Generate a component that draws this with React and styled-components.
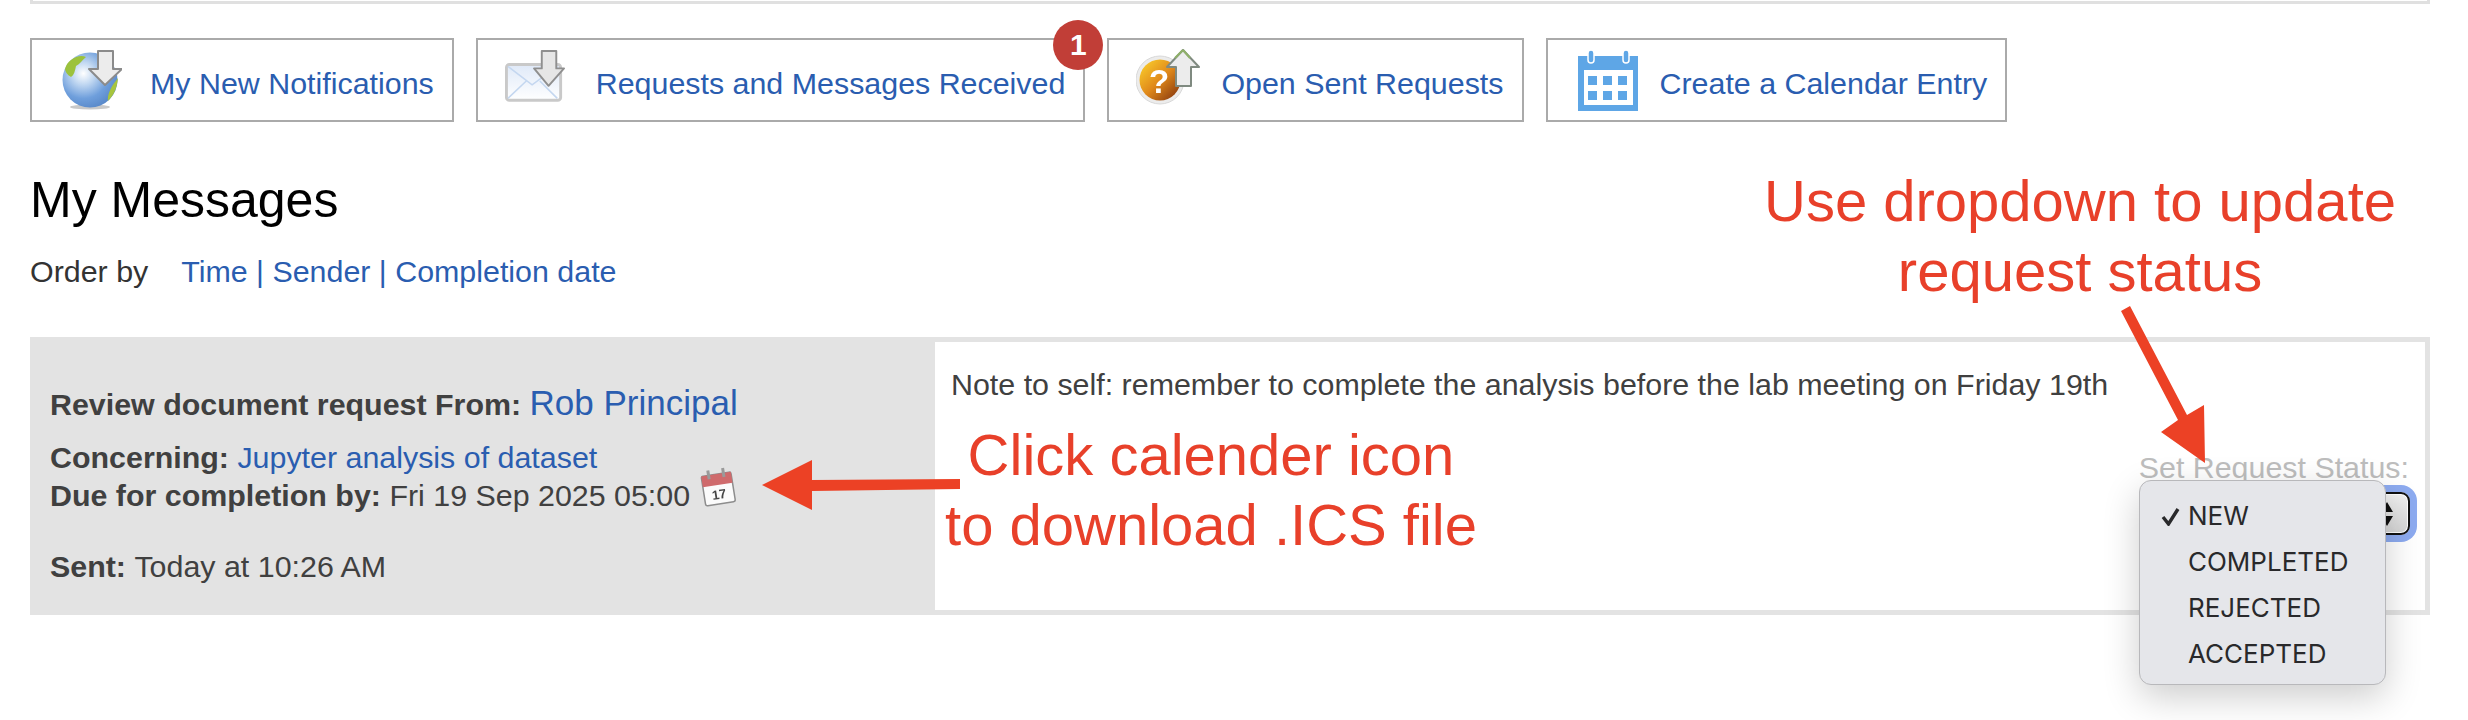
import React from "react";
import styled, { createGlobalStyle } from "styled-components";

const GlobalStyle = createGlobalStyle`
  html, body {
    margin: 0;
    padding: 0;
    background: #fff;
  }
  body {
    font-family: "Liberation Sans", Arial, sans-serif;
    color: #404040;
  }
`;

const Page = styled.div`
  position: relative;
  width: 2468px;
  height: 720px;
  padding: 0 38px 0 30px;
  box-sizing: border-box;
  overflow: hidden;
`;

const TopStrip = styled.div`
  height: 1px;
  border: 3px solid #e0e0e0;
  border-top: none;
`;

const Toolbar = styled.nav`
  display: flex;
  gap: 22px;
  margin-top: 34px;
`;

const ToolButton = styled.a`
  position: relative;
  display: flex;
  align-items: center;
  gap: ${(p) => p.$gap}px;
  height: 84px;
  padding: 0 18px 0 ${(p) => p.$inset}px;
  box-sizing: border-box;
  border: 2px solid #aaaaaa;
  background: #fff;
  color: #2a5db0;
  font-size: 30.4px;
  white-space: nowrap;
`;

const ButtonLabel = styled.span`
  padding-top: 6px;
`;

const IconSvg = styled.svg`
  display: block;
  flex: none;
  width: ${(p) => p.$w || 60}px;
  height: 62px;
  filter: blur(0.6px);
`;

const Badge = styled.span`
  position: absolute;
  top: -20px;
  right: -20px;
  width: 50px;
  height: 50px;
  border-radius: 50%;
  background: #c13e37;
  color: #fff;
  font-size: 30px;
  font-weight: 700;
  line-height: 50px;
  text-align: center;
`;

const Heading = styled.h1`
  margin: 49px 0 0;
  color: #000;
  font-size: 50px;
  font-weight: 400;
  line-height: 58px;
`;

const OrderRow = styled.div`
  display: flex;
  gap: 33px;
  margin-top: 24px;
  color: #333;
  font-size: 30.4px;
  line-height: 36px;
`;

const LinkText = styled.a`
  color: #2a5db0;
`;

const MessageRow = styled.section`
  display: flex;
  height: 278px;
  margin-top: 48px;
`;

const MessageMeta = styled.div`
  flex: none;
  width: 905px;
  padding: 47px 0 0 20px;
  box-sizing: border-box;
  background: #e3e3e3;
  font-size: 30.4px;
  line-height: 38px;
`;

const MetaLine = styled.div`
  margin-top: ${(p) => p.$gap || 0}px;
`;

const Sender = styled.a`
  color: #2a5db0;
  font-size: 35px;
`;

const SmallCal = styled.svg`
  width: 40px;
  height: 42px;
  margin: -20px 0 0 8px;
  vertical-align: -2px;
  filter: blur(0.7px);
`;

const MessageBody = styled.div`
  flex: 1;
  display: flex;
  flex-direction: column;
  align-items: flex-end;
  padding: 24px 16px 0 11px;
  border: 5px solid #e3e3e3;
  border-left: none;
  font-size: 30.4px;
  line-height: 36px;
`;

const Note = styled.p`
  align-self: flex-start;
  margin: 0;
  padding-left: 5px;
`;

const StatusLabel = styled.div`
  margin-top: 47px;
  color: #bdbdbd;
`;

const StatusSelect = styled.div`
  position: relative;
  display: flex;
  justify-content: flex-end;
  align-items: center;
  width: 200px;
  height: 43px;
  margin: 7px -1px 0 0;
  padding-right: 14px;
  box-sizing: border-box;
  border: 2px solid #111;
  border-radius: 9px;
  background: linear-gradient(#f1f1f1, #d6d6d6);
  box-shadow: 0 0 0 7px #8dabf0, inset 0 0 0 1px #fff;
`;

const Menu = styled.ul`
  position: absolute;
  top: -14px;
  right: 22px;
  width: 247px;
  height: 205px;
  margin: 0;
  padding: 12px 0 0;
  box-sizing: border-box;
  list-style: none;
  border: 1px solid #b8b8bb;
  border-radius: 12px;
  background: #e5e6ea;
  box-shadow: 0 12px 36px rgba(0, 0, 0, 0.2);
  color: #29292b;
  font-family: Inter, "Liberation Sans", sans-serif;
  font-size: 26px;
  line-height: 46px;
`;

const MenuItem = styled.li`
  position: relative;
  padding-left: 48px;
`;

const Tick = styled.svg`
  position: absolute;
  left: 21px;
  top: 14px;
  width: 19px;
  height: 19px;
`;

const Annotation = styled.div`
  position: absolute;
  left: ${(p) => p.$x}px;
  top: ${(p) => p.$y}px;
  width: ${(p) => p.$w}px;
  color: #e8402a;
  font-size: 58px;
  line-height: 70px;
  text-align: center;
`;

const ArrowLayer = styled.svg`
  position: absolute;
  left: 0;
  top: 0;
  width: 2468px;
  height: 720px;
  pointer-events: none;
`;

function GlobeIcon() {
  return (
    <IconSvg viewBox="0 0 60 62">
      <defs>
        <radialGradient id="globe" cx="38%" cy="38%" r="70%">
          <stop offset="0" stopColor="#ffffff" />
          <stop offset="0.28" stopColor="#c3d9f2" />
          <stop offset="0.65" stopColor="#6f9fdc" />
          <stop offset="1" stopColor="#5585c6" />
        </radialGradient>
      </defs>
      <ellipse cx="28" cy="58" rx="20" ry="2.5" fill="#c9c9c9" />
      <circle cx="28" cy="31" r="27.5" fill="url(#globe)" />
      <path d="M9 11 C14 7 20 6 24 8 C20 11 18 15 14 17 C13 22 12 26 9 28 C5 26 3 22 3 20 C4 16 6 13 9 11 Z" fill="#9cc23c" />
      <path d="M53 33 L56 29 C55 40 51 47 46 52 C45 46 49 38 53 33 Z" fill="#a7c53e" />
      <path d="M36 2 H51 V20 H60 L43 36 L27 20 H36 Z" fill="#ececec" stroke="#8b8b8b" strokeWidth="2" strokeLinejoin="round" />
    </IconSvg>
  );
}

function EnvelopeIcon() {
  return (
    <IconSvg viewBox="0 0 62 62">
      <defs>
        <linearGradient id="env" x1="0" y1="0" x2="0" y2="1">
          <stop offset="0" stopColor="#dfe9f8" />
          <stop offset="1" stopColor="#ffffff" />
        </linearGradient>
      </defs>
      <rect x="1.5" y="15" width="56" height="37" rx="3" fill="url(#env)" stroke="#c9c9c9" strokeWidth="3" />
      <path d="M3 17 L28 36 L54 17 M3 50 L22 32 M54 50 L36 32" fill="none" stroke="#c4d7f0" strokeWidth="1.6" />
      <path d="M38 1 H53 V19 H61 L45 37 L30 19 H38 Z" fill="#e6e6e6" stroke="#8f8f8f" strokeWidth="2" strokeLinejoin="round" />
    </IconSvg>
  );
}

function QuestionIcon() {
  return (
    <IconSvg $w={64} viewBox="0 0 64 62">
      <defs>
        <linearGradient id="orb" x1="0.1" y1="0.1" x2="0.9" y2="0.9">
          <stop offset="0" stopColor="#f7c72a" />
          <stop offset="0.5" stopColor="#e0891a" />
          <stop offset="1" stopColor="#8f3f10" />
        </linearGradient>
      </defs>
      <circle cx="24" cy="31" r="24" fill="#ececec" stroke="#d8d8d8" />
      <circle cx="24" cy="31" r="20.5" fill="url(#orb)" />
      <text x="23" y="44" fill="#fff" fontFamily="Liberation Sans, sans-serif" fontSize="33" fontWeight="700" textAnchor="middle">?</text>
      <path d="M47 1 L63 18 H55 V37 H40 V18 H31 Z" fill="#ececec" stroke="#7f8a80" strokeWidth="2" strokeLinejoin="round" />
      <path d="M47 1 L54 9 M47 1 L39 9" stroke="#8fb069" strokeWidth="2" fill="none" />
    </IconSvg>
  );
}

function CalendarIcon() {
  const cells = [];
  [27, 42].forEach((y) => {
    [10, 25, 40].forEach((x) => {
      cells.push(<rect key={`${x}-${y}`} x={x} y={y} width="9" height="9" />);
    });
  });
  return (
    <IconSvg viewBox="0 0 60 62">
      <path d="M0 7 H60 V62 H0 Z" fill="#5ea6e6" />
      <path d="M6 21 H55 V56 H6 Z" fill="#fff" />
      <rect x="10" y="1" width="6" height="13" rx="3" fill="#5ea6e6" stroke="#fff" strokeWidth="1.5" />
      <rect x="45" y="1" width="6" height="13" rx="3" fill="#5ea6e6" stroke="#fff" strokeWidth="1.5" />
      <g fill="#5ea6e6">{cells}</g>
    </IconSvg>
  );
}

function TinyCalendar() {
  return (
    <SmallCal viewBox="0 0 38 42">
      <g transform="rotate(-9 19 21)">
        <rect x="4" y="8" width="30" height="30" rx="2" fill="#fbfbfb" stroke="#8d8d8d" strokeWidth="1.5" />
        <rect x="4" y="8" width="30" height="11" fill="#cf6a6c" />
        <rect x="10" y="3" width="3" height="9" fill="#9a9a9a" />
        <rect x="25" y="3" width="3" height="9" fill="#9a9a9a" />
        <text x="19" y="33" fill="#444" fontFamily="Liberation Sans, sans-serif" fontSize="13" fontWeight="700" textAnchor="middle">17</text>
      </g>
    </SmallCal>
  );
}

const buttons = [
  { label: "My New Notifications", Icon: GlobeIcon, inset: 30, gap: 28 },
  { label: "Requests and Messages Received", Icon: EnvelopeIcon, inset: 27, gap: 31, count: 1 },
  { label: "Open Sent Requests", Icon: QuestionIcon, inset: 27, gap: 21 },
  { label: "Create a Calendar Entry", Icon: CalendarIcon, inset: 30, gap: 22 },
];

const statuses = ["NEW", "COMPLETED", "REJECTED", "ACCEPTED"];

export default function App() {
  return (
    <Page>
      <GlobalStyle />
      <TopStrip />
      <Toolbar>
        {buttons.map(({ label, Icon, count, inset, gap }) => (
          <ToolButton key={label} $inset={inset} $gap={gap}>
            <Icon />
            <ButtonLabel>{label}</ButtonLabel>
            {count ? <Badge>{count}</Badge> : null}
          </ToolButton>
        ))}
      </Toolbar>
      <Heading>My Messages</Heading>
      <OrderRow>
        <span>Order by</span>
        <LinkText>Time | Sender | Completion date</LinkText>
      </OrderRow>
      <MessageRow>
        <MessageMeta>
          <MetaLine>
            <b>Review document request From: </b>
            <Sender>Rob Principal</Sender>
          </MetaLine>
          <MetaLine $gap={15}>
            <b>Concerning: </b>
            <LinkText>Jupyter analysis of dataset</LinkText>
          </MetaLine>
          <MetaLine>
            <b>Due for completion by: </b>Fri 19 Sep 2025 05:00
            <TinyCalendar />
          </MetaLine>
          <MetaLine $gap={33}>
            <b>Sent: </b>Today at 10:26 AM
          </MetaLine>
        </MessageMeta>
        <MessageBody>
          <Note>Note to self: remember to complete the analysis before the lab meeting on Friday 19th</Note>
          <StatusLabel>Set Request Status:</StatusLabel>
          <StatusSelect>
            <svg width="14" height="26" viewBox="0 0 14 26">
              <path d="M7 1 L13 11 H1 Z M7 25 L13 15 H1 Z" fill="#111" />
            </svg>
            <Menu>
              {statuses.map((status, i) => (
                <MenuItem key={status}>
                  {i === 0 ? (
                    <Tick viewBox="0 0 19 19">
                      <path d="M2 10 L7.5 17 L17 2" fill="none" stroke="#29292b" strokeWidth="3.4" />
                    </Tick>
                  ) : null}
                  {status}
                </MenuItem>
              ))}
            </Menu>
          </StatusSelect>
        </MessageBody>
      </MessageRow>
      <Annotation $x={1700} $y={166} $w={760}>
        Use dropdown to update<br />request status
      </Annotation>
      <Annotation $x={911} $y={420} $w={600}>
        Click calender icon<br />to download .ICS file
      </Annotation>
      <ArrowLayer viewBox="0 0 2468 720">
        <path d="M762 485 L812 460 L812 480 L960 479 L960 489 L812 491 L812 510 Z" fill="#ec4125" />
        <path d="M2121 311 L2130 306 L2187 415 L2204 405 L2205 463 L2161 432 L2178 420 Z" fill="#ec4125" />
      </ArrowLayer>
    </Page>
  );
}
